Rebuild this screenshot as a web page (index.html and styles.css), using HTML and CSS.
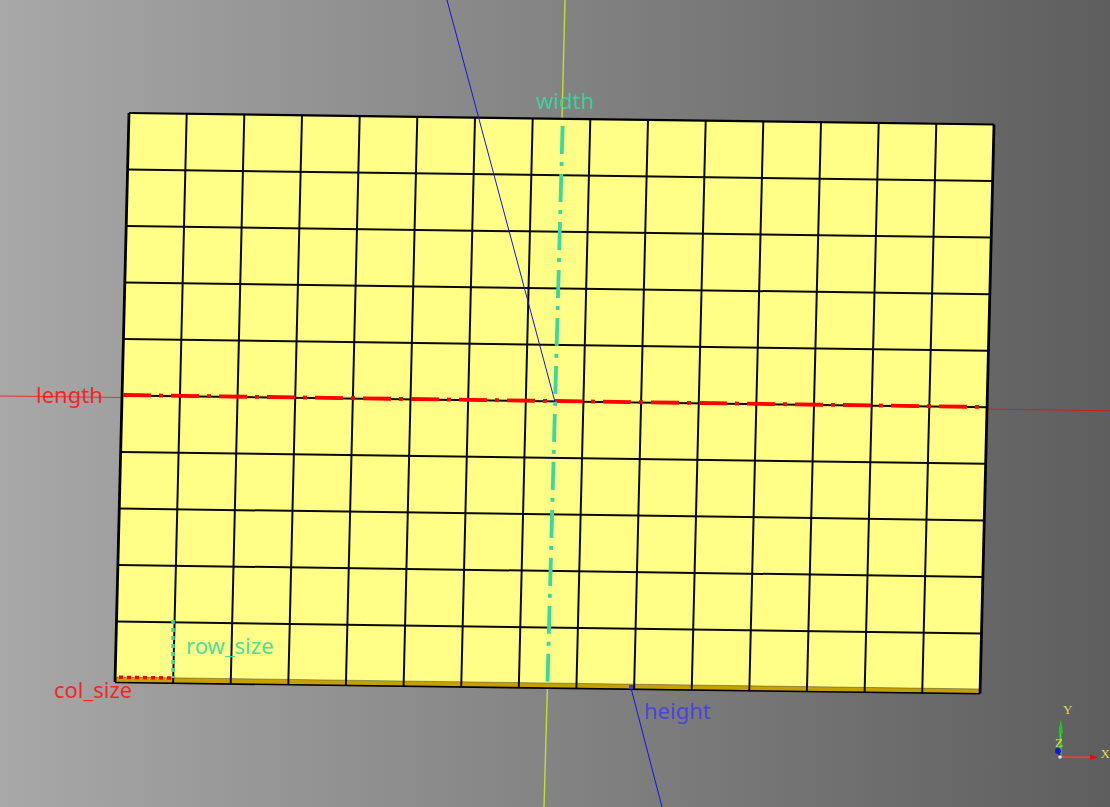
FILE: index.html
```html
<!DOCTYPE html>
<html>
  <head>
    <title>Sketch grid</title>

    <link rel="stylesheet" href="styles.css">
  </head>
  <body>
    <div class="viewport">
      <svg class="scene" width="1110" height="807" viewBox="0 0 1110 807">
        <!-- thin sketch axes behind the plate -->
        <line class="axis-x" x1="0" y1="396" x2="123" y2="397.5"/>
        <line class="axis-x" x1="986" y1="409" x2="1110" y2="410.8"/>
        <line class="axis-y" x1="565" y1="0" x2="562" y2="118"/>
        <line class="axis-y" x1="547.5" y1="684" x2="544" y2="807"/>

        <!-- plate -->
        <polygon class="plate-side" points="115.5,677 980,689 980,693 115,682"/>
        <polygon class="plate-top" points="129,113 994,124.5 980,689 115.5,677"/>

        <!-- columns -->
        <g class="grid">
          <line x1="186.7" y1="113.8" x2="173.1" y2="683"/>
          <line x1="244.3" y1="114.5" x2="230.7" y2="684"/>
          <line x1="302" y1="115.3" x2="288.3" y2="684.8"/>
          <line x1="359.7" y1="116.1" x2="345.9" y2="685.6"/>
          <line x1="417.3" y1="116.8" x2="403.6" y2="686.4"/>
          <line x1="475" y1="117.6" x2="461.2" y2="687.2"/>
          <line x1="532.7" y1="118.4" x2="518.8" y2="688"/>
          <line x1="590.3" y1="119.1" x2="576.4" y2="688.8"/>
          <line x1="648" y1="119.9" x2="634.1" y2="689.6"/>
          <line x1="705.7" y1="120.7" x2="691.7" y2="690.4"/>
          <line x1="763.3" y1="121.4" x2="749.3" y2="691.2"/>
          <line x1="821" y1="122.2" x2="806.9" y2="692"/>
          <line x1="878.7" y1="123" x2="864.6" y2="692.8"/>
          <line x1="936.3" y1="123.7" x2="922.2" y2="693.6"/>
        </g>

        <!-- rows -->
        <g class="grid">
          <line x1="127.6" y1="169.5" x2="992.6" y2="181"/>
          <line x1="126.3" y1="226" x2="991.2" y2="237.6"/>
          <line x1="125" y1="282.5" x2="989.8" y2="294.2"/>
          <line x1="123.6" y1="339" x2="988.4" y2="350.7"/>
          <line x1="122.2" y1="395.5" x2="987" y2="407.3"/>
          <line x1="120.9" y1="452" x2="985.6" y2="463.8"/>
          <line x1="119.5" y1="508.5" x2="984.2" y2="520.4"/>
          <line x1="118.2" y1="565" x2="982.8" y2="576.9"/>
          <line x1="116.8" y1="621.5" x2="981.4" y2="633.5"/>
        </g>

        <!-- outline -->
        <polyline class="edge-thin" points="115.5,677 980,689"/>
        <polyline class="edge-low" points="115,682.5 980,693.8"/>
        <polyline class="edge" points="129,113 994,124.5"/>
        <polyline class="edge-side" points="129,113 115,682"/>
        <polyline class="edge-side" points="994,124.5 980,693.5"/>

        <!-- height constraint -->
        <line class="axis-z" x1="447" y1="0" x2="555" y2="402"/>
        <line class="axis-z" x1="631" y1="688" x2="662" y2="807"/>
        <rect class="height-point" x="629" y="685" width="4" height="4"/>

        <!-- center lines -->
        <line class="center-length" x1="123" y1="395" x2="985" y2="407"/>
        <line class="center-width" x1="562.6" y1="126" x2="547.5" y2="683"/>

        <!-- cell size constraints -->
        <line class="size-col" x1="119" y1="677.3" x2="172" y2="678"/>
        <line class="size-row" x1="173" y1="620" x2="173" y2="678"/>

        <text class="label label-green" x="536" y="109">width</text>
        <text class="label label-red" x="36" y="403">length</text>
        <text class="label label-green" x="186" y="654">row_size</text>
        <text class="label label-red" x="54" y="698">col_size</text>
        <text class="label label-blue" x="644" y="719">height</text>

        <!-- view triad -->
        <line class="triad-y" x1="1060.5" y1="756" x2="1060.5" y2="726"/>
        <polygon class="triad-y-head" points="1060.8,719 1063,733 1058.5,733"/>
        <line class="triad-x" x1="1060" y1="757" x2="1092" y2="757.3"/>
        <polygon class="triad-x-head" points="1098,757.5 1090,754.5 1090,760"/>
        <line class="triad-z" x1="1060" y1="756" x2="1058" y2="750"/>
        <circle class="triad-z" cx="1058" cy="751" r="2"/>
        <circle class="triad-origin" cx="1060" cy="757" r="1.8"/>
        <text class="triad-label" x="1063" y="714">Y</text>
        <text class="triad-label" x="1055" y="747">Z</text>
        <text class="triad-label" x="1100.5" y="758">X</text>
      </svg>
    </div>
  </body>
</html>
```

FILE: styles.css
```css
body {
  margin: 0;
  background-color: rgb(128, 128, 128);
}

.viewport {
  width: 1110px;
  height: 807px;
  overflow: hidden;
  background: linear-gradient(90deg, rgb(168, 168, 168), rgb(94, 94, 94));
}

.scene {
  display: block;
}

.plate-top {
  fill: rgb(255, 255, 136);
}

.plate-side {
  fill: rgb(196, 160, 0);
}

.grid line {
  stroke: rgb(10, 10, 0);
  stroke-width: 2;
}

.edge {
  fill: none;
  stroke: black;
  stroke-width: 2.2;
}

.edge-low {
  fill: none;
  stroke: black;
  stroke-width: 1.6;
}

.edge-thin {
  fill: none;
  stroke: rgba(40, 30, 0, 0.35);
  stroke-width: 1;
}

.edge-side {
  fill: none;
  stroke: black;
  stroke-width: 2.8;
}

.axis-x {
  stroke: rgba(255, 0, 0, 0.7);
  stroke-width: 1;
}

.axis-y {
  stroke: rgb(190, 225, 50);
  stroke-width: 1.4;
}

.axis-z {
  stroke: rgb(20, 20, 225);
  stroke-width: 1;
}

.height-point {
  fill: rgb(60, 60, 220);
}

.center-length {
  stroke: rgb(255, 0, 0);
  stroke-width: 3.8;
  stroke-dasharray: 28 8 4 8;
}

.center-width {
  stroke: rgb(56, 217, 160);
  stroke-width: 3.8;
  stroke-dasharray: 28 8 4 8;
}

.size-col {
  stroke: rgb(255, 0, 0);
  stroke-width: 3.5;
  stroke-dasharray: 4 4;
}

.size-row {
  stroke: rgb(56, 217, 160);
  stroke-width: 3.5;
  stroke-dasharray: 4 4;
}

.label {
  font-family: "Noto Sans", sans-serif;
  font-size: 22px;
  opacity: 0.88;
}

.label-green {
  fill: rgb(56, 217, 160);
}

.label-red {
  fill: rgb(255, 20, 20);
}

.label-blue {
  fill: rgb(64, 64, 230);
}

.triad-y {
  stroke: rgb(30, 230, 30);
  stroke-width: 2;
}

.triad-y-head {
  fill: rgb(30, 200, 30);
}

.triad-x {
  stroke: rgb(210, 70, 70);
  stroke-width: 2;
}

.triad-x-head {
  fill: rgb(230, 10, 10);
}

.triad-z {
  stroke: rgb(20, 20, 220);
  stroke-width: 2;
  fill: rgb(20, 20, 220);
}

.triad-origin {
  fill: rgb(230, 220, 240);
}

.triad-label {
  font-family: "Liberation Serif", serif;
  font-size: 13px;
  fill: rgb(225, 220, 70);
}
```
